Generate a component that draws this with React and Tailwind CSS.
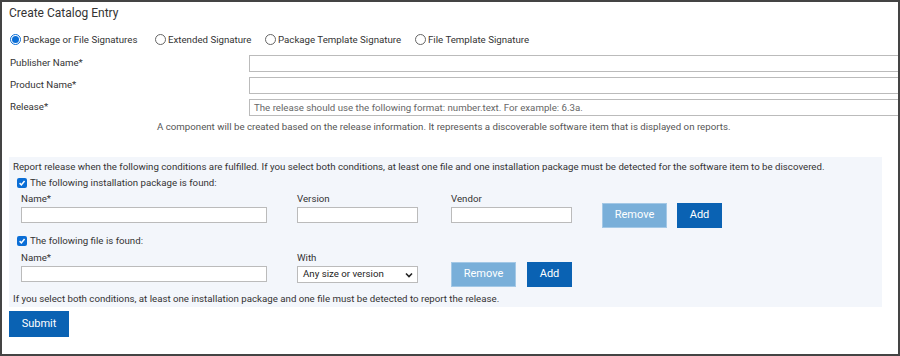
import React from 'react'

const Radio = ({ checked, label, width }) => (
  <label className={`flex items-center gap-[2px] ${width || ''}`}>
    {checked ? (
      <span className="w-[11px] h-[11px] rounded-full border border-[#0b6ed6] flex items-center justify-center bg-white">
        <span className="w-[7px] h-[7px] rounded-full bg-[#0b6ed6]" />
      </span>
    ) : (
      <span className="w-[11px] h-[11px] rounded-full border border-[#666] bg-white" />
    )}
    <span>{label}</span>
  </label>
)

const Check = ({ label }) => (
  <div className="flex items-center gap-[3px] h-[12px] pl-[8px] text-[9.7px] text-[#333]">
    <span className="w-[10px] h-[10px] rounded-[2px] bg-[#0b6ed6] flex items-center justify-center">
      <svg width="8" height="8" viewBox="0 0 10 10">
        <path d="M2 5.2 L4.2 7.4 L8.2 2.6" stroke="white" strokeWidth="1.9" fill="none" />
      </svg>
    </span>
    <span>{label}</span>
  </div>
)

const Field = ({ label, width, children }) => (
  <div className={`flex flex-col ${width}`}>
    <span className="text-[9.7px] text-[#333] leading-[12px] h-[12px] mb-[2px]">{label}</span>
    {children || <div className="h-[16px] bg-white border border-[#bbb]" />}
  </div>
)

const Btn = ({ children, light, width }) => (
  <button
    className={`${width} h-[25px] mt-[10px] text-white text-[11px] ${light ? 'bg-[#79afd9] border border-[#a3c8e6]' : 'bg-[#0a62b3]'}`}
  >
    {children}
  </button>
)

export default function App() {
  return (
    <div
      className="w-[900px] h-[356px] bg-white border-2 border-[#444] overflow-hidden text-[#333]"
      style={{ fontFamily: 'Roboto, "Liberation Sans", sans-serif' }}
    >
      <div className="pl-[7px]">
        <h1 className="text-[12px] leading-[22px] h-[22px]">Create Catalog Entry</h1>

        {/* signature type */}
        <div className="flex items-center text-[9.7px] mt-[8px] pl-[1px] h-[16px]">
          <Radio checked width="w-[145px]" label="Package or File Signatures" />
          <Radio width="w-[110px]" label="Extended Signature" />
          <Radio width="w-[150px]" label="Package Template Signature" />
          <Radio label="File Template Signature" />
        </div>

        {/* main fields */}
        <div className="mt-[7px] flex flex-col gap-[5px] text-[9.7px]">
          {['Publisher Name*', 'Product Name*'].map(l => (
            <div key={l} className="flex items-center">
              <span className="w-[240px] pl-[1px]">{l}</span>
              <div className="flex-1 h-[17px] border border-[#bbb] -mr-[4px]" />
            </div>
          ))}
          <div className="flex items-center">
            <span className="w-[240px] pl-[1px]">Release*</span>
            <div className="flex-1 h-[17px] border border-[#bbb] -mr-[4px] text-[9.7px] text-[#666] pl-[4px] leading-[15px] whitespace-nowrap overflow-hidden">
              The release should use the following format: number.text. For example: 6.3a.
            </div>
          </div>
        </div>
        <p className="text-[9.7px] leading-[12px] text-[#555] mt-[5px] pl-[148px]">
          A component will be created based on the release information. It represents a discoverable software item that is displayed on reports.
        </p>

        {/* conditions */}
        <div className="bg-[#f3f6fb] w-[873px] mt-[24px] pt-[4px] pb-[2px]">
          <p className="text-[9.7px] leading-[12px] pl-[4px] whitespace-nowrap">
            Report release when the following conditions are fulfilled. If you select both conditions, at least one file and one installation package must be detected for the software item to be discovered.
          </p>
          <div className="mt-[4px]">
            <Check label="The following installation package is found:" />
          </div>
          <div className="flex items-start pl-[12px] mt-[4px]">
            <Field label="Name*" width="w-[246px]" />
            <div className="w-[30px]" />
            <Field label="Version" width="w-[121px]" />
            <div className="w-[33px]" />
            <Field label="Vendor" width="w-[121px]" />
            <div className="w-[30px]" />
            <Btn light width="w-[65px]">Remove</Btn>
            <div className="w-[10px]" />
            <Btn width="w-[45px]">Add</Btn>
          </div>

          <div className="mt-[7px]">
            <Check label="The following file is found:" />
          </div>
          <div className="flex items-start pl-[12px] mt-[5px]">
            <Field label="Name*" width="w-[246px]" />
            <div className="w-[30px]" />
            <Field label="With" width="w-[121px]">
              <div className="h-[17px] bg-white border border-[#bbb] flex items-center justify-between pl-[5px] pr-[4px] text-[9.7px] text-[#222]">
                <span>Any size or version</span>
                <svg width="8" height="6" viewBox="0 0 8 6">
                  <path d="M1 1.5 L4 4.5 L7 1.5" stroke="#222" strokeWidth="1.6" fill="none" />
                </svg>
              </div>
            </Field>
            <div className="w-[33px]" />
            <Btn light width="w-[65px]">Remove</Btn>
            <div className="w-[11px]" />
            <Btn width="w-[45px]">Add</Btn>
          </div>
          <p className="text-[9.7px] leading-[12px] mt-[6px] pl-[4px]">
            If you select both conditions, at least one installation package and one file must be detected to report the release.
          </p>
        </div>

        <button className="mt-[4px] w-[60px] h-[26px] bg-[#0a62b3] text-white text-[11px]">Submit</button>
      </div>
    </div>
  )
}
